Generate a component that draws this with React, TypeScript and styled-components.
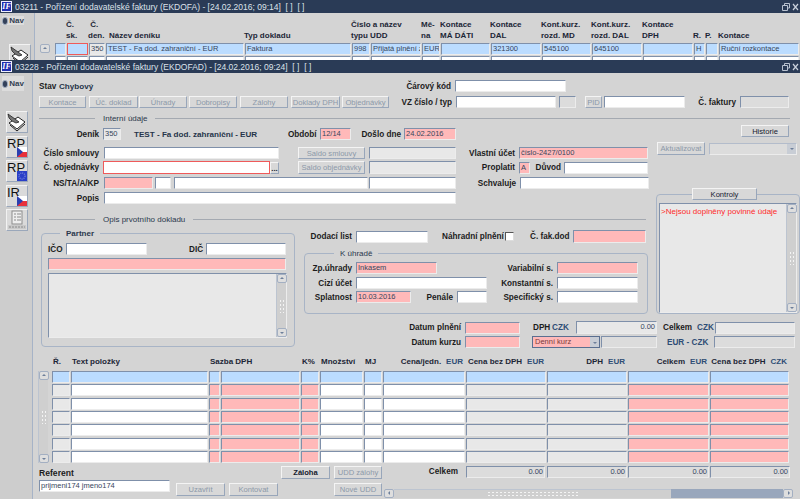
import React from 'react';
import styled, { createGlobalStyle, css } from 'styled-components';

const GlobalStyle = createGlobalStyle`
  html, body { margin: 0; padding: 0; background: #d4d4d4; }
  body { font-family: "Liberation Sans", Arial, sans-serif; font-size: 8px; color: #1c1c1c; }
  * { box-sizing: border-box; }
`;

type Tone = 'white' | 'pink' | 'blue' | 'grey' | 'dim' | 'red' | 'redBlue';

const toneBg: Record<Tone, string> = {
  white: '#ffffff',
  pink: '#ffb9b9',
  blue: '#bbdcff',
  grey: '#e8e8e8',
  dim: '#dcdcdc',
  red: '#ffffff',
  redBlue: '#bbdcff',
};

const Page = styled.div`
  width: 800px;
  height: 499px;
  display: flex;
  flex-direction: column;
  overflow: hidden;
  background: #d4d4d4;
`;

const Win = styled.section<{ $h: number }>`
  height: ${(p) => p.$h}px;
  display: flex;
  flex-direction: column;
  overflow: hidden;
  flex: none;
`;

const TitleBar = styled.header<{ $h: number }>`
  height: ${(p) => p.$h}px;
  flex: none;
  background: #2a3b56;
  color: #dde2ea;
  font-size: 8.5px;
  display: flex;
  align-items: center;
  padding-right: 1px;
`;

const Logo = styled.span`
  width: 11px;
  height: 11px;
  margin: 0 3px 0 1px;
  background: #1f2fb0;
  border: 1px solid #eef;
  color: #fff;
  font: italic bold 8px "Liberation Serif", serif;
  line-height: 9px;
  text-align: center;
  flex: none;
`;

const TitleText = styled.span`
  flex: 1;
  white-space: pre;
`;

const WinBody = styled.div`
  flex: 1;
  display: flex;
  min-height: 0;
`;

const Rail = styled.aside<{ $w: number }>`
  width: ${(p) => p.$w}px;
  flex: none;
  background: #cdcdcd;
  border-right: 1px solid #a6b3c7;
  display: flex;
  flex-direction: column;
  align-items: flex-start;
`;

const NavTab = styled.div<{ $mt: number }>`
  margin: ${(p) => p.$mt}px 0 0 2px;
  width: 22px;
  height: 15px;
  background: #dcdcdc;
  display: flex;
  align-items: center;
  gap: 2px;
  padding-left: 1px;
  font-weight: bold;
  font-size: 8px;
  color: #333f52;
`;

const NavDot = styled.i`
  width: 6px;
  height: 6px;
  border-radius: 50%;
  background: #33415a;
  box-shadow: 0 0 0 1px #9aa6b8;
`;

const ToolList = styled.div<{ $mt: number; $ml: number }>`
  margin: ${(p) => p.$mt}px 0 0 ${(p) => p.$ml}px;
  display: flex;
  flex-direction: column;
  gap: 2.5px;
`;

const Tool = styled.div`
  width: 22px;
  height: 22px;
  position: relative;
  background: #dadada;
  border: 1px solid;
  border-color: #f2f2f2 #9aa7ba #9aa7ba #f2f2f2;
  overflow: hidden;
  flex: none;
`;

const ToolText = styled.span`
  font-size: 13px;
  line-height: 13px;
  color: #111;
  display: block;
`;

const Flag = styled.svg`
  position: absolute;
  right: 0;
  bottom: 0;
`;

const Content = styled.main`
  flex: 1;
  min-width: 0;
  padding-left: 6px;
  display: flex;
  flex-direction: column;
`;

const Row = styled.div<{ $mt?: number; $h?: number }>`
  display: flex;
  align-items: center;
  flex: none;
  margin-top: ${(p) => p.$mt ?? 0}px;
  height: ${(p) => p.$h ?? 12}px;
`;

const Label = styled.span<{ $w: number; $ml?: number; $left?: boolean; $blue?: boolean }>`
  width: ${(p) => p.$w}px;
  margin-left: ${(p) => p.$ml ?? 0}px;
  flex: none;
  font-weight: bold;
  font-size: 8.2px;
  white-space: nowrap;
  text-align: ${(p) => (p.$left ? 'left' : 'right')};
  color: ${(p) => (p.$blue ? '#2f4d75' : '#1c1c1c')};
`;

const Plain = styled.span<{ $w: number; $ml?: number }>`
  width: ${(p) => p.$w}px;
  margin-left: ${(p) => p.$ml ?? 0}px;
  flex: none;
  font-size: 8.1px;
  font-weight: bold;
  color: #26344a;
  white-space: nowrap;
`;

const Field = styled.div<{ $w?: number; $ml?: number; $mt?: number; $h?: number; $tone?: Tone; $right?: boolean }>`
  ${(p) => (p.$w ? `width: ${p.$w}px;` : '')}
  height: ${(p) => p.$h ?? 12}px;
  margin-left: ${(p) => p.$ml ?? 0}px;
  margin-top: ${(p) => p.$mt ?? 0}px;
  flex: none;
  background: ${(p) => toneBg[p.$tone ?? 'white']};
  border: 1px solid;
  border-color: #7f90aa #ececec #ececec #7f90aa;
  font-size: 7.5px;
  line-height: 10px;
  padding: 0 1px;
  overflow: hidden;
  white-space: nowrap;
  color: #37465c;
  text-align: ${(p) => (p.$right ? 'right' : 'left')};
  ${(p) =>
    (p.$tone === 'red' || p.$tone === 'redBlue') &&
    css`
      border: 1px solid #ef5a5a;
    `}
`;

const Btn = styled.div<{ $w: number; $ml?: number; $mt?: number; $h?: number; $on?: boolean; $dark?: boolean }>`
  width: ${(p) => p.$w}px;
  height: ${(p) => p.$h ?? 13}px;
  margin-left: ${(p) => p.$ml ?? 0}px;
  margin-top: ${(p) => p.$mt ?? 0}px;
  flex: none;
  background: #d8d8d8;
  border: 1px solid;
  border-color: #f4f4f4 #98a6ba #98a6ba #f4f4f4;
  text-align: center;
  font-size: 7.6px;
  line-height: 11px;
  white-space: nowrap;
  overflow: hidden;
  color: ${(p) => (p.$on || p.$dark ? '#15202f' : '#8c98a9')};
  font-weight: ${(p) => (p.$on ? 'bold' : 'normal')};
`;

const Section = styled.div<{ $h?: number; $mt?: number }>`
  display: flex;
  align-items: center;
  flex: none;
  height: ${(p) => p.$h ?? 12}px;
  margin-top: ${(p) => p.$mt ?? 0}px;
  font-size: 8px;
  color: #2b384c;
  gap: 8px;
  margin-right: 10px;

  &::before {
    content: '';
    width: 56px;
    height: 1px;
    background: #a4a9b1;
  }
  &::after {
    content: '';
    flex: 1;
    height: 1px;
    background: #a4a9b1;
  }
`;

const MainGrid = styled.div`
  display: grid;
  margin-top: 1px;
  grid-template-columns: 265px 352px 144px;
  grid-template-rows: 87px 16px 88px 34px;
  grid-template-areas:
    'intern intern aside'
    'opis opis aside'
    'partner middle aside'
    'partner datum datum';
`;

const Area = styled.div<{ $name: string }>`
  grid-area: ${(p) => p.$name};
  min-width: 0;
  min-height: 0;
`;

const Group = styled.div<{ $w: number; $h: number; $mt?: number; $ml?: number; $pt: number; $pl: number }>`
  position: relative;
  width: ${(p) => p.$w}px;
  height: ${(p) => p.$h}px;
  margin: ${(p) => p.$mt ?? 0}px 0 0 ${(p) => p.$ml ?? 0}px;
  padding: ${(p) => p.$pt}px 0 0 ${(p) => p.$pl}px;
  border: 1px solid #a8b4c6;
  border-radius: 4px;
`;

const Legend = styled.span<{ $left: number; $bold?: boolean }>`
  position: absolute;
  top: -5px;
  left: ${(p) => p.$left}px;
  background: #d4d4d4;
  padding: 0 6px;
  font-size: 8px;
  line-height: 9px;
  font-weight: ${(p) => (p.$bold ? 'bold' : 'normal')};
  color: #2b384c;
`;

const TabButton = styled.div`
  position: absolute;
  top: -7px;
  left: 35px;
`;

const Memo = styled.div<{ $w: number; $h: number; $mt?: number }>`
  width: ${(p) => p.$w}px;
  height: ${(p) => p.$h}px;
  margin-top: ${(p) => p.$mt ?? 0}px;
  display: flex;
  background: #e8e8e8;
  border: 1px solid;
  border-color: #7f90aa #ececec #ececec #7f90aa;
`;

const MemoText = styled.div`
  flex: 1;
  color: #ff2a2a;
  font-size: 8px;
  padding: 3px 1px;
  white-space: nowrap;
`;

const Scroll = styled.div<{ $w?: number }>`
  width: ${(p) => p.$w ?? 10}px;
  flex: none;
  background: #cfcfcf;
  border-left: 1px solid #bcc4d0;
  display: flex;
  flex-direction: column;
  justify-content: space-between;
  align-items: center;
`;

const Arrow = styled.div<{ $dir: 'up' | 'down' | 'left' | 'right' }>`
  width: 10px;
  height: 9px;
  flex: none;
  background: #dedede;
  border: 1px solid #a3afc2;
  border-radius: 2px;
  display: flex;
  align-items: center;
  justify-content: center;

  &::after {
    content: '';
    border: 2.5px solid transparent;
    ${(p) => {
      if (p.$dir === 'up') return 'border-bottom-color: #6d7f9a; margin-top: -3px;';
      if (p.$dir === 'down') return 'border-top-color: #6d7f9a; margin-top: 3px;';
      if (p.$dir === 'left') return 'border-right-color: #6d7f9a; margin-left: -3px;';
      return 'border-left-color: #6d7f9a; margin-left: 3px;';
    }}
  }
`;

const Grip = styled.i`
  width: 6px;
  height: 14px;
  background-image: radial-gradient(circle, #f4f4f4 0.8px, transparent 1px);
  background-size: 3px 4px;
`;

const SelectArrow = styled.i`
  width: 9px;
  height: 10px;
  margin-left: auto;
  flex: none;
  display: flex;
  align-items: center;
  justify-content: center;
  background: #c8cdd5;

  &::after {
    content: '';
    border: 2.5px solid transparent;
    border-top-color: #6d7f9a;
    margin-top: 3px;
  }
`;

const Select = styled.div<{ $w: number; $ml?: number; $tone: Tone; $strong?: boolean }>`
  width: ${(p) => p.$w}px;
  height: 12px;
  margin-left: ${(p) => p.$ml ?? 0}px;
  flex: none;
  display: flex;
  background: ${(p) => toneBg[p.$tone]};
  border: 1px solid;
  border-color: ${(p) => (p.$strong ? '#5a6f90' : '#b3bccb #ececec #ececec #b3bccb')};
  font-size: 7.5px;
  line-height: 10px;
  padding-left: 2px;
  color: #7a3a3a;
`;

const Check = styled.i`
  width: 9px;
  height: 9px;
  margin-left: 3px;
  background: #fff;
  border: 1px solid;
  border-color: #555 #ddd #ddd #555;
  flex: none;
`;

const BackGrid = styled.div`
  display: grid;
  grid-template-columns: 12px 22px 17px 139px 107px 19px 51px 19px 50px 51px 50px 51px 51px 12px 13px 81px;
  grid-auto-rows: 12px;
  row-gap: 1px;
`;

const BackHead = styled(BackGrid)`
  grid-auto-rows: 22px;
  margin: 6px 0 2px 0;
`;

const HeadCell = styled.div<{ $span?: number; $pl?: number }>`
  ${(p) => (p.$span ? `grid-column: span ${p.$span};` : '')}
  padding-left: ${(p) => p.$pl ?? 0}px;
  margin-left: -1px;
  font-weight: bold;
  font-size: 8px;
  line-height: 11px;
  white-space: nowrap;
  align-self: end;
  color: #1c2636;
`;

const Cell = styled(Field)`
  width: calc(100% - 1px);
  height: 12px;
`;

const BackMain = styled.div`
  flex: 1;
  display: flex;
  min-width: 0;
`;

const ArrowColumn = styled.div`
  width: 20px;
  padding: 31px 0 0 5px;
  flex: none;
`;

const TableHead = styled.div`
  display: grid;
  grid-template-columns: 19px 138px 92px 19px 44px 19px 83px 81px 81px 82px 80px;
  height: 12px;
  margin: 6px 4px 3px 14px;
`;

const ColHead = styled.div<{ $align?: 'left' | 'right' }>`
  font-weight: bold;
  font-size: 8px;
  line-height: 12px;
  white-space: nowrap;
  text-align: ${(p) => p.$align ?? 'left'};
  padding-right: ${(p) => (p.$align === 'right' ? 4 : 0)}px;
  color: #1c2636;

  b {
    color: #2f4d75;
    margin-left: 5px;
  }
`;

const TableWrap = styled.div`
  display: flex;
  margin-left: -1px;
`;

const TableBody = styled.div`
  display: grid;
  grid-template-columns: 19px 138px 12px 80px 19px 44px 19px 83px 81px 81px 82px 80px;
  grid-auto-rows: 12px;
  row-gap: 1.33px;
  margin-left: 4px;
`;

const Footer = styled.footer`
  display: flex;
  flex: none;
  height: 36px;
`;

const FootCol = styled.div<{ $w: number; $ml?: number; $mt?: number }>`
  width: ${(p) => p.$w}px;
  margin: ${(p) => p.$mt ?? 0}px 0 0 ${(p) => p.$ml ?? 0}px;
  flex: none;
  display: flex;
  flex-direction: column;
`;

const RefLabel = styled.span`
  margin-top: 5px;
  font-weight: bold;
  font-size: 8.6px;
  line-height: 10px;
`;

const HScroll = styled.div`
  height: 9px;
  margin-top: 11px;
  display: flex;
  align-items: stretch;
`;

const HTrack = styled.div`
  width: 277px;
  background: #cfcfcf;
  border-top: 1px solid #bcc4d0;
  display: flex;
  align-items: center;
  justify-content: center;
`;

const HGrip = styled.i`
  width: 92px;
  height: 6px;
  background-image: radial-gradient(circle, #f4f4f4 0.8px, transparent 1px);
  background-size: 4px 3px;
`;

const HRest = styled.div`
  width: 112px;
  background: #99a7bc;
`;

const CZFlag = () => (
  <Flag width="10" height="10" viewBox="0 0 10 10">
    <rect width="10" height="5" fill="#fff" />
    <rect y="5" width="10" height="5" fill="#e8303a" />
    <path d="M0 0L6 5L0 10Z" fill="#2a3fb0" />
  </Flag>
);

const EUFlag = () => (
  <Flag width="10" height="10" viewBox="0 0 10 10">
    <rect width="10" height="10" fill="#2a3fc8" />
    <circle cx="5" cy="5" r="3" fill="none" stroke="#6f7fd8" strokeWidth="1.4" strokeDasharray="1 1" />
  </Flag>
);

const SignIcon = () => (
  <svg width="20" height="20" viewBox="0 0 20 20">
    <path d="M2 11L10 17L18 10L11 5Z" fill="#fff" stroke="#222" strokeWidth="1" />
    <path d="M3 13L10 19L18 12" fill="none" stroke="#222" strokeWidth="1" />
    <path d="M1 2L8 7L12 10L9 11L5 9L2 6Z" fill="#777" stroke="#222" strokeWidth="0.8" />
  </svg>
);

const ListIcon = () => (
  <svg width="20" height="20" viewBox="0 0 20 20">
    <rect x="5" y="1" width="10" height="13" fill="#eee" stroke="#8c8c8c" />
    <path d="M7 4h2M10 4h4M7 7h2M10 7h4M7 10h2M10 10h4" stroke="#8c8c8c" />
    <rect x="1" y="15" width="18" height="4" fill="#c9c9c9" />
    <path d="M2 17h16" stroke="#8c8c8c" strokeDasharray="2 1" />
  </svg>
);

const WinControls = () => (
  <svg width="18" height="10" viewBox="0 0 18 10">
    <path d="M3.5 3.5V1.5H8.5V6H6.5M1.5 3.5H6.5V8.5H1.5Z" fill="none" stroke="#b9c2d0" />
    <path d="M12 2L17 8M17 2L12 8" stroke="#c9d0db" strokeWidth="1.2" />
  </svg>
);

const backCols: Tone[] = ['blue', 'redBlue', 'grey', 'blue', 'blue', 'blue', 'blue', 'blue', 'blue', 'blue', 'blue', 'blue', 'blue', 'blue', 'blue', 'blue'];
const backValues = ['', '', '350', 'TEST - Fa dod. zahraniční - EUR', 'Faktura', '998', 'Přijatá plnění z', 'EUR', '', '321300', '545100', '645100', '', 'H', '', 'Ruční rozkontace'];
const itemCols: Tone[] = ['grey', 'white', 'pink', 'pink', 'pink', 'white', 'white', 'white', 'grey', 'grey', 'pink', 'pink'];
const toolbar = [
  { text: 'Kontace', w: 47 },
  { text: 'Úč. doklad', w: 49, ml: 3 },
  { text: 'Úhrady', w: 48, ml: 1 },
  { text: 'Dobropisy', w: 48, ml: 2 },
  { text: 'Zálohy', w: 48, ml: 3 },
  { text: 'Doklady DPH', w: 49, ml: 3 },
  { text: 'Objednávky', w: 47, ml: 2 },
];

export default function App() {
  return (
    <Page>
      <GlobalStyle />
      <Win $h={60}>
        <TitleBar $h={13}>
          <Logo>IF</Logo>
          <TitleText>03211 - Pořízení dodavatelské faktury (EKDOFA) - [24.02.2016; 09:14]  [ ]  [ ]</TitleText>
          <WinControls />
        </TitleBar>
        <WinBody>
          <Rail $w={35}>
            <NavTab $mt={3}>
              <NavDot />
              Nav
            </NavTab>
            <ToolList $mt={19} $ml={9}>
              <Tool>
                <SignIcon />
              </Tool>
            </ToolList>
          </Rail>
          <ArrowColumn>
            <Arrow $dir="up" />
          </ArrowColumn>
          <BackMain>
            <div>
              <BackHead>
                <HeadCell />
                <HeadCell>Č.<br />sk.</HeadCell>
                <HeadCell>&nbsp;Č.<br />den.</HeadCell>
                <HeadCell $pl={4}>Název deníku</HeadCell>
                <HeadCell>Typ dokladu</HeadCell>
                <HeadCell $span={2}>Číslo a název<br />typu UDD</HeadCell>
                <HeadCell>Mě-<br />na</HeadCell>
                <HeadCell>Kontace<br />MÁ DÁTI</HeadCell>
                <HeadCell>Kontace<br />DAL</HeadCell>
                <HeadCell>Kont.kurz.<br />rozd. MD</HeadCell>
                <HeadCell>Kont.kurz.<br />rozd. DAL</HeadCell>
                <HeadCell>Kontace<br />DPH</HeadCell>
                <HeadCell>R.</HeadCell>
                <HeadCell>P.</HeadCell>
                <HeadCell>Kontace</HeadCell>
              </BackHead>
              <BackGrid>
                {backCols.map((tone, i) => (
                  <Cell key={i} $tone={tone}>{backValues[i]}</Cell>
                ))}
                {backCols.map((_, i) => (
                  <Cell key={i} $tone="white" />
                ))}
              </BackGrid>
            </div>
          </BackMain>
        </WinBody>
      </Win>

      <Win $h={439}>
        <TitleBar $h={13}>
          <Logo>IF</Logo>
          <TitleText>03228 - Pořízení dodavatelské faktury (EKDOFAD) - [24.02.2016; 09:24]  [ ]  [ ]</TitleText>
          <WinControls />
        </TitleBar>
        <WinBody>
          <Rail $w={33}>
            <NavTab $mt={3}>
              <NavDot />
              Nav
            </NavTab>
            <ToolList $mt={20} $ml={6}>
              <Tool>
                <SignIcon />
              </Tool>
              <Tool>
                <ToolText>RP</ToolText>
                <CZFlag />
              </Tool>
              <Tool>
                <ToolText>RP</ToolText>
                <EUFlag />
              </Tool>
              <Tool>
                <ToolText>IR</ToolText>
                <CZFlag />
              </Tool>
              <Tool>
                <ListIcon />
              </Tool>
            </ToolList>
          </Rail>

          <Content>
            <Row $mt={7}>
              <Label $w={20} $left>Stav</Label>
              <Plain $w={50}>Chybový</Plain>
              <Label $w={342}>Čárový kód</Label>
              <Field $w={111} $ml={4} />
            </Row>
            <Row $mt={4}>
              {toolbar.map((b) => (
                <Btn key={b.text} $w={b.w} $ml={b.ml} $h={12}>{b.text}</Btn>
              ))}
              <Label $w={63}>VZ číslo / typ</Label>
              <Field $w={100} $ml={4} />
              <Field $w={17} $ml={3} $tone="dim" />
              <Btn $w={17} $ml={9} $h={12}>PID</Btn>
              <Field $w={81} $ml={2} />
              <Label $w={51}>Č. faktury</Label>
              <Field $w={49} $ml={4} $tone="dim" />
            </Row>
            <Section $mt={4}>Interní údaje</Section>

            <MainGrid>
              <Area $name="intern">
                <Row $mt={3}>
                  <Label $w={60}>Deník</Label>
                  <Field $w={18} $ml={4} $tone="grey">350</Field>
                  <Plain $w={154} $ml={13}>TEST - Fa dod. zahraniční - EUR</Plain>
                  <Label $w={28}>Období</Label>
                  <Field $w={31} $ml={4} $tone="pink">12/14</Field>
                  <Label $w={40} $ml={10}>Došlo dne</Label>
                  <Field $w={52} $ml={3} $tone="pink">24.02.2016</Field>
                </Row>
                <Row $mt={7}>
                  <Label $w={60}>Číslo smlouvy</Label>
                  <Field $w={175} $ml={5} />
                  <Btn $w={67} $ml={19} $h={12}>Saldo smlouvy</Btn>
                  <Field $w={87} $ml={4} $tone="grey" />
                  <Label $w={59}>Vlastní účet</Label>
                  <Field $w={129} $ml={4} $tone="pink">číslo-2427/0100</Field>
                </Row>
                <Row $mt={2} $h={13}>
                  <Label $w={60}>Č. objednávky</Label>
                  <Field $w={167} $ml={4} $h={13} $tone="red" />
                  <Btn $w={9} $h={12} $on>...</Btn>
                  <Btn $w={67} $ml={19} $h={13}>Saldo objednávky</Btn>
                  <Field $w={87} $ml={4} $h={13} $tone="grey" />
                  <Label $w={59}>Proplatit</Label>
                  <Field $w={11} $ml={4} $tone="pink">A</Field>
                  <Label $w={31}>Důvod</Label>
                  <Field $w={84} $ml={3} />
                </Row>
                <Row $mt={3}>
                  <Label $w={60}>NS/TA/A/KP</Label>
                  <Field $w={49} $ml={5} $tone="pink" />
                  <Field $w={16} $ml={2} />
                  <Field $w={194} $ml={3} />
                  <Field $w={87} $ml={1} />
                  <Label $w={60}>Schvaluje</Label>
                  <Field $w={129} $ml={4} />
                </Row>
                <Row $mt={3}>
                  <Label $w={60}>Popis</Label>
                  <Field $w={352} $ml={5} />
                </Row>
              </Area>

              <Area $name="opis">
                <Section $h={14}>Opis prvotního dokladu</Section>
              </Area>

              <Area $name="partner">
                <Group $w={254} $h={114} $mt={5} $ml={2} $pt={9} $pl={6}>
                  <Legend $left={18} $bold>Partner</Legend>
                  <Row>
                    <Label $w={15} $left>IČO</Label>
                    <Field $w={81} $ml={3} />
                    <Label $w={13} $ml={42} $left>DIČ</Label>
                    <Field $w={80} $ml={4} />
                  </Row>
                  <Field $w={238} $mt={3} $tone="pink" />
                  <Memo $w={239} $h={65} $mt={3}>
                    <MemoText />
                    <Scroll>
                      <Arrow $dir="up" />
                      <Grip />
                      <Arrow $dir="down" />
                    </Scroll>
                  </Memo>
                </Group>
              </Area>

              <Area $name="middle">
                <Row $mt={2} $h={13}>
                  <Label $w={48}>Dodací list</Label>
                  <Field $w={72} $ml={4} />
                  <Label $w={60} $ml={14}>Náhradní plnění</Label>
                  <Check />
                  <Label $w={39} $ml={16}>Č. fak.dod</Label>
                  <Field $w={73} $ml={4} $h={13} $tone="pink" />
                </Row>
                <Group $w={344} $h={61} $mt={10} $pt={8} $pl={0}>
                  <Legend $left={29}>K úhradě</Legend>
                  <Row>
                    <Label $w={47}>Zp.úhrady</Label>
                    <Field $w={81} $ml={4} $tone="pink">Inkasem</Field>
                    <Label $w={116}>Variabilní s.</Label>
                    <Field $w={81} $ml={4} $tone="pink" />
                  </Row>
                  <Row $mt={3}>
                    <Label $w={47}>Cizí účet</Label>
                    <Field $w={131} $ml={4} />
                    <Label $w={66}>Konstantní s.</Label>
                    <Field $w={81} $ml={4} />
                  </Row>
                  <Row $mt={2}>
                    <Label $w={47}>Splatnost</Label>
                    <Field $w={55} $ml={4} $tone="pink">10.03.2016</Field>
                    <Label $w={42}>Penále</Label>
                    <Field $w={30} $ml={4} />
                    <Label $w={66}>Specifický s.</Label>
                    <Field $w={81} $ml={4} />
                  </Row>
                </Group>
              </Area>

              <Area $name="aside">
                <Btn $w={48} $ml={85} $h={12} $dark>Historie</Btn>
                <Row $mt={5} $h={13}>
                  <Btn $w={48} $ml={1}>Aktualizovat</Btn>
                  <Select $w={88} $ml={4} $tone="dim">
                    <SelectArrow />
                  </Select>
                </Row>
                <Group $w={144} $h={120} $mt={39} $pt={8} $pl={2}>
                  <TabButton>
                    <Btn $w={65} $h={12} $dark>Kontroly</Btn>
                  </TabButton>
                  <Memo $w={138} $h={110}>
                    <MemoText>&gt;Nejsou doplněny povinné údaje</MemoText>
                    <Scroll>
                      <Arrow $dir="up" />
                      <Grip />
                      <Arrow $dir="down" />
                    </Scroll>
                  </Memo>
                </Group>
              </Area>

              <Area $name="datum">
                <Row $mt={5} $h={13}>
                  <Label $w={157}>Datum plnění</Label>
                  <Field $w={55} $ml={4} $tone="pink" />
                  <Label $w={15} $ml={13} $left>DPH</Label>
                  <Label $w={15} $ml={4} $left $blue>CZK</Label>
                  <Field $w={81} $ml={9} $h={13} $tone="grey" $right>0.00</Field>
                  <Label $w={30} $ml={6} $left>Celkem</Label>
                  <Label $w={15} $ml={4} $left $blue>CZK</Label>
                  <Field $w={80} $ml={3} $tone="grey" />
                </Row>
                <Row $mt={2}>
                  <Label $w={157}>Datum kurzu</Label>
                  <Field $w={55} $ml={4} $tone="pink" />
                  <Select $w={68} $ml={12} $tone="pink" $strong>
                    Denní kurz
                    <SelectArrow />
                  </Select>
                  <Field $w={56} $ml={1} $tone="dim" />
                  <Label $w={40} $ml={10} $left $blue>EUR - CZK</Label>
                  <Field $w={81} $ml={7} $tone="dim" />
                </Row>
              </Area>
            </MainGrid>

            <TableHead>
              <ColHead>Ř.</ColHead>
              <ColHead>Text položky</ColHead>
              <ColHead>Sazba DPH</ColHead>
              <ColHead>K%</ColHead>
              <ColHead>Množství</ColHead>
              <ColHead>MJ</ColHead>
              <ColHead $align="right">Cena/jedn.<b>EUR</b></ColHead>
              <ColHead $align="right">Cena bez DPH<b>EUR</b></ColHead>
              <ColHead $align="right">DPH<b>EUR</b></ColHead>
              <ColHead $align="right">Celkem<b>EUR</b></ColHead>
              <ColHead $align="right">Cena bez DPH<b>CZK</b></ColHead>
            </TableHead>
            <TableWrap>
              <Scroll>
                <Arrow $dir="up" />
                <Grip />
                <Arrow $dir="down" />
              </Scroll>
              <TableBody>
                {itemCols.map((_, c) => (
                  <Cell key={c} $tone="blue" />
                ))}
                {[1, 2, 3, 4, 5, 6].map((r) =>
                  itemCols.map((tone, c) => <Cell key={`${r}-${c}`} $tone={tone} />),
                )}
              </TableBody>
            </TableWrap>

            <Footer>
              <FootCol $w={131}>
                <RefLabel>Referent</RefLabel>
                <Field $w={131} $mt={2}>prijmeni174 jmeno174</Field>
              </FootCol>
              <Row $mt={20} $h={13}>
                <Btn $w={49} $ml={6}>Uzavřít</Btn>
                <Btn $w={49} $ml={4}>Kontovat</Btn>
              </Row>
              <FootCol $w={49} $ml={3} $mt={3}>
                <Btn $w={49} $on>Záloha</Btn>
              </FootCol>
              <FootCol $w={48} $ml={4} $mt={3}>
                <Btn $w={48}>UDD zálohy</Btn>
                <Btn $w={48} $mt={4}>Nové UDD</Btn>
              </FootCol>
              <FootCol $w={410} $ml={2} $mt={3}>
                <Row>
                  <Label $w={30} $ml={44}>Celkem</Label>
                  <Field $w={79} $ml={8} $tone="dim" $right>0.00</Field>
                  <Field $w={80} $ml={2} $tone="dim" $right>0.00</Field>
                  <Field $w={81} $ml={1} $tone="dim" $right>0.00</Field>
                  <Field $w={80} $ml={1} $tone="dim" $right>0.00</Field>
                </Row>
                <HScroll>
                  <Arrow $dir="left" />
                  <HTrack>
                    <HGrip />
                  </HTrack>
                  <HRest />
                  <Arrow $dir="right" />
                </HScroll>
              </FootCol>
            </Footer>
          </Content>
        </WinBody>
      </Win>
    </Page>
  );
}
